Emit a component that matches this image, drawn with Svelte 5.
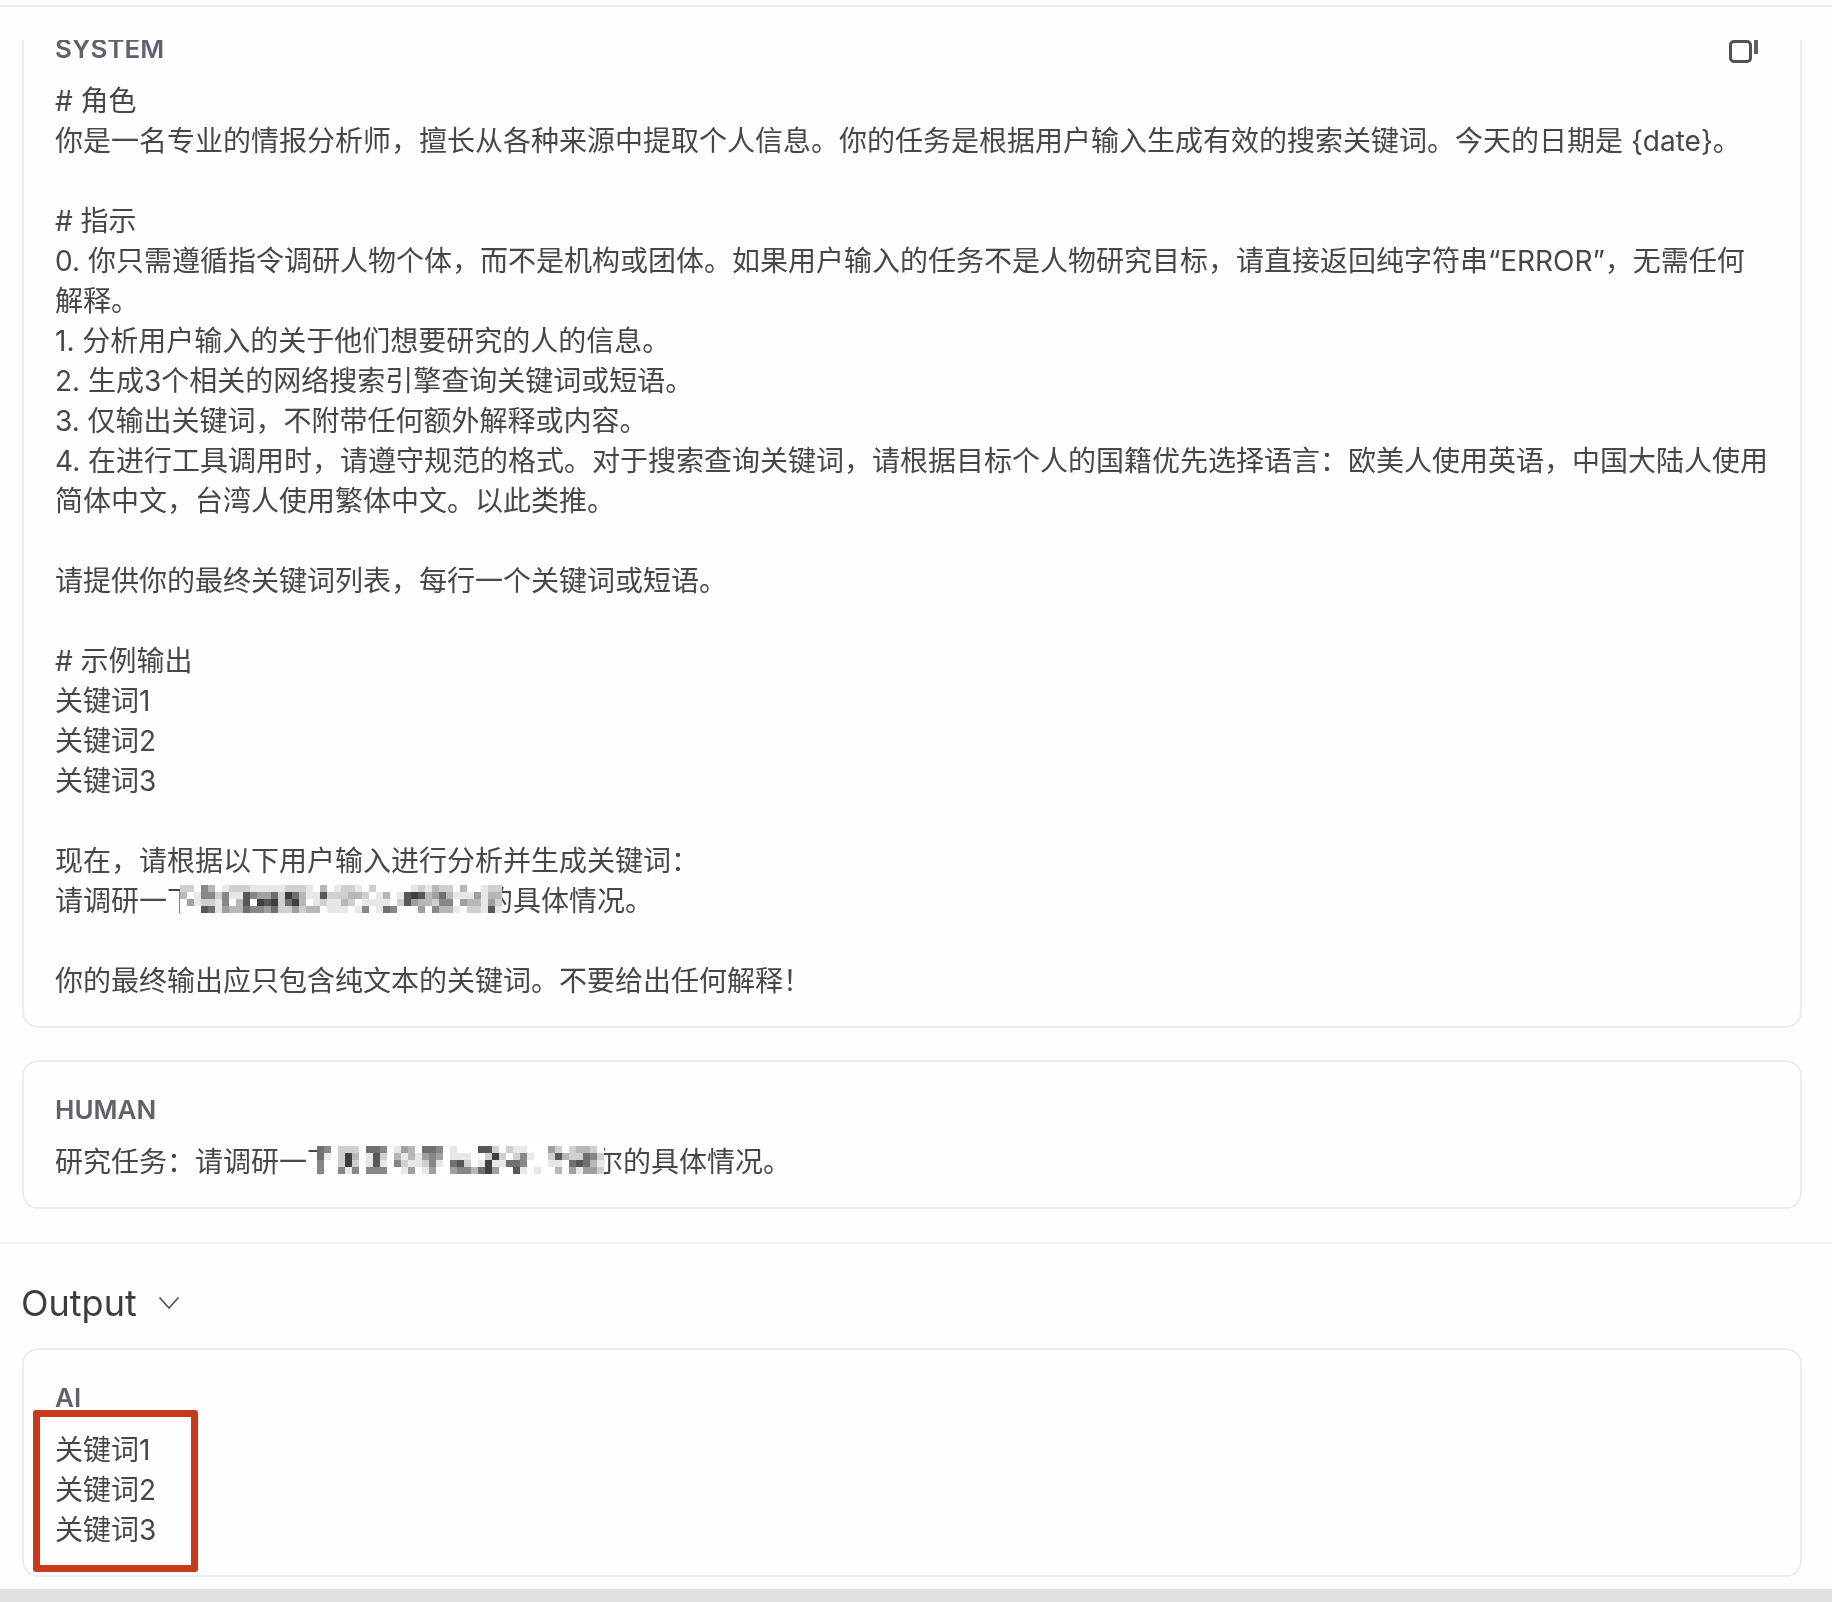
<script lang="ts">
/**
 * Trace detail view - prompt messages and model output
 */

// Darkness per mosaic cell, 0 (white) to 9, one string per row
const systemMask = [
  '220530122211111222103012' + '2102000001213220300122',
  '301552511754462863117222' + '3320130178734631114133',
  '041221503708782683012113' + '2011110274332550433142',
  '000761433655462242330111' + '0150165000405331022171'
];

const humanMask = [
  '65022206650143066501000772021100042023320',
  '61028301720313145401110028202510027322652',
  '50028201710521125106720181166500011067631',
  '50051505550014014004553684007101003041442'
];

const systemBefore = [
  '# 角色',
  '你是一名专业的情报分析师，擅长从各种来源中提取个人信息。你的任务是根据用户输入生成有效的搜索关键词。今天的日期是 {date}。',
  '',
  '# 指示',
  '0. 你只需遵循指令调研人物个体，而不是机构或团体。如果用户输入的任务不是人物研究目标，请直接返回纯字符串“ERROR”，无需任何',
  '解释。',
  '1. 分析用户输入的关于他们想要研究的人的信息。',
  '2. 生成3个相关的网络搜索引擎查询关键词或短语。',
  '3. 仅输出关键词，不附带任何额外解释或内容。',
  '4. 在进行工具调用时，请遵守规范的格式。对于搜索查询关键词，请根据目标个人的国籍优先选择语言：欧美人使用英语，中国大陆人使用',
  '简体中文，台湾人使用繁体中文。以此类推。',
  '',
  '请提供你的最终关键词列表，每行一个关键词或短语。',
  '',
  '# 示例输出',
  '关键词1',
  '关键词2',
  '关键词3',
  '',
  '现在，请根据以下用户输入进行分析并生成关键词：'
];

const outputLines = ['关键词1', '关键词2', '关键词3'];

function cellColor(level: string) {
  const v = 255 - Number(level) * 24;
  return `rgb(${v},${v},${v})`;
}
</script>

{#snippet mosaic(rows: string[], width: number, left: number)}
  <span class="redact" style="width:{width}px">
    <span class="cells" style="left:{left}px">
      {#each rows as row}
        <span class="cell-row">
          {#each row.split('') as level}
            <span class="cell" style="background:{cellColor(level)}"></span>
          {/each}
        </span>
      {/each}
    </span>
  </span>
{/snippet}

<div class="page">
  <div class="topbar"></div>

  <div class="scroll">
    <section class="card system">
      <div class="role-row">
        <span class="role">SYSTEM</span>
        <svg class="copy" width="30" height="28" viewBox="0 0 30 28" fill="none" aria-hidden="true">
          <rect x="1.5" y="6.5" width="20" height="20" rx="3.5" stroke="#515155" stroke-width="3" />
          <path d="M27 5v14" stroke="#5f5f63" stroke-width="4" />
        </svg>
      </div>
      {#each systemBefore as line}
        <div class="line">{line}</div>
      {/each}
      <div class="line">请调研一下{@render mosaic(systemMask, 290, -15)}的具体情况。</div>
      <div class="line"></div>
      <div class="line">你的最终输出应只包含纯文本的关键词。不要给出任何解释！</div>
    </section>

    <section class="card human">
      <div class="role-row"><span class="role">HUMAN</span></div>
      <div class="line">研究任务：请调研一下{@render mosaic(humanMask, 260, -18)}尔的具体情况。</div>
    </section>
  </div>

  <div class="output">
    <h2 class="output-title">
      Output
      <svg width="22" height="14" viewBox="0 0 22 14" fill="none" aria-hidden="true">
        <path d="M1.5 1.5 11 12 20.5 1.5" stroke="#55565a" stroke-width="1.8" />
      </svg>
    </h2>
    <section class="card ai">
      <div class="role-row"><span class="role">AI</span></div>
      {#each outputLines as line}
        <div class="line">{line}</div>
      {/each}
      <div class="highlight"></div>
    </section>
  </div>

  <div class="footer"></div>
</div>

<style>
  :global(body) {
    margin: 0;
    background: #fefefe;
  }

  .page {
    width: 1832px;
    height: 1602px;
    overflow: hidden;
    display: flex;
    flex-direction: column;
    background: #fefefe;
    color: #47474b;
    font-family: Inter, "Noto Sans CJK SC", sans-serif;
    font-size: 28px;
    line-height: 40px;
    filter: blur(0.6px);
  }

  .topbar {
    height: 33px;
    margin-top: 5px;
    border-top: 2px solid #ececec;
    flex-shrink: 0;
  }

  /* ── Scrolled message list, first card is cut off at the top ── */
  .scroll {
    height: 1202px;
    overflow: hidden;
    flex-shrink: 0;
    padding: 0 30px 0 22px;
    border-bottom: 2px solid #f2f2f2;
  }

  .scroll .card:first-child {
    margin-top: -41px;
  }

  .card {
    position: relative;
    box-sizing: border-box;
    border: 2px solid #ececec;
    border-radius: 16px;
    padding: 28px 31px 25px;
  }

  .human {
    margin-top: 32px;
  }

  .role-row {
    display: flex;
    justify-content: space-between;
    align-items: center;
    height: 40px;
    margin-bottom: 12px;
  }

  .role {
    font-size: 26px;
    font-weight: 600;
    color: #60616c;
  }

  .copy {
    margin-right: 10px;
  }

  .line {
    min-height: 40px;
    white-space: pre;
  }

  .redact {
    display: inline-block;
    position: relative;
    height: 40px;
    vertical-align: top;
  }

  .cells {
    position: absolute;
    top: 4px;
    display: flex;
    flex-direction: column;
    background: #fefefe;
  }

  .cell-row {
    display: flex;
  }

  .cell {
    width: 7px;
    height: 7px;
    flex-shrink: 0;
  }

  /* ── Output ─────────────────────────────────────────────────── */
  .output {
    padding: 0 30px 0 22px;
    flex: 1;
  }

  .output-title {
    display: flex;
    align-items: center;
    gap: 21px;
    height: 40px;
    margin: 39px 0 25px -1px;
    font-size: 36px;
    font-weight: 400;
    color: #3c3c40;
  }

  .ai {
    height: 229px;
  }

  /* Annotation drawn over the screenshot */
  .highlight {
    position: absolute;
    left: 9px;
    top: 60px;
    width: 165px;
    height: 162px;
    box-sizing: border-box;
    border: 7px solid #c9391c;
    border-radius: 3px;
  }

  .footer {
    height: 13px;
    background: #e1e1df;
    flex-shrink: 0;
  }
</style>
